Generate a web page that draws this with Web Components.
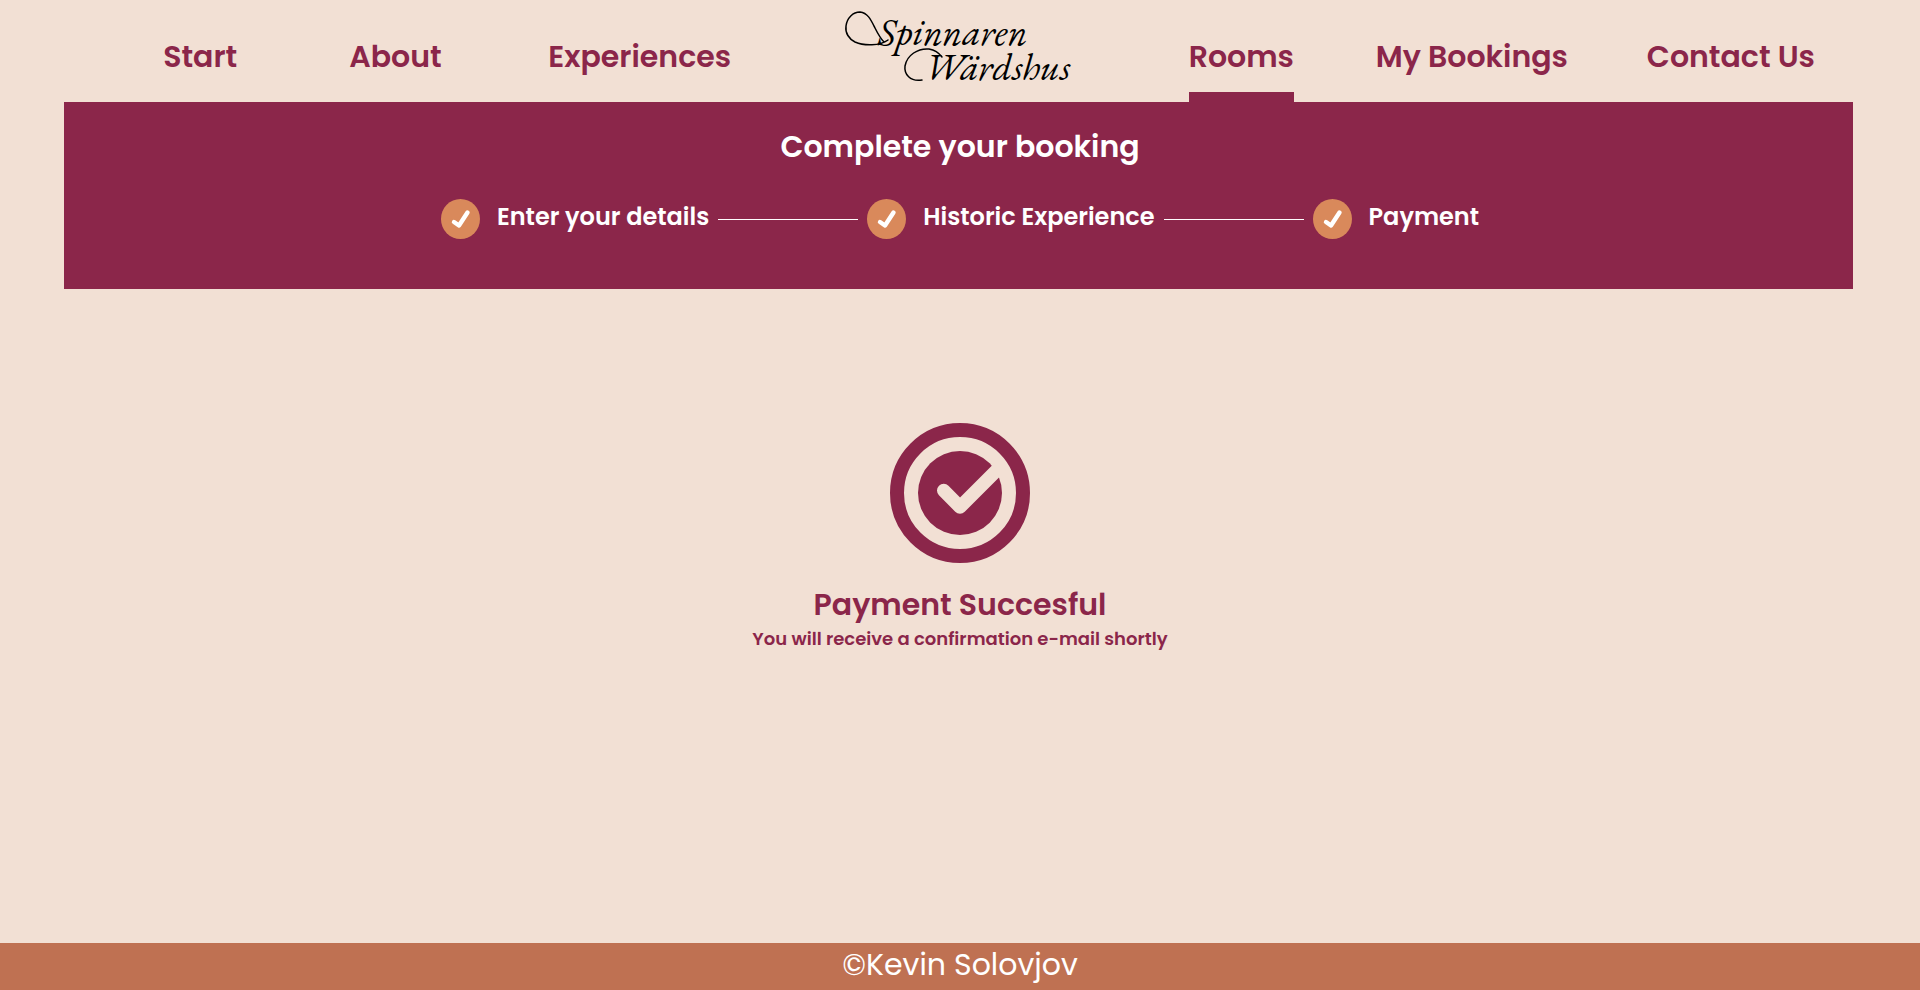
<!DOCTYPE html>
<html lang="en">
<head>
<meta charset="utf-8">
<title>Spinnaren Wärdshus – Payment</title>
<style>
  :root { --sand: #f2e0d4; --wine: #8b264a; --amber: #d9895b; --clay: #bf7152; --white: #fff; }
  body { margin: 0; background: var(--sand); color: var(--wine); font-family: Poppins, Inter, sans-serif; }
</style>
</head>
<body>
<booking-page></booking-page>

<script>
const define = (name, html) => {
  const template = document.createElement('template');
  template.innerHTML = html;
  customElements.define(name, class extends HTMLElement {
    constructor() {
      super();
      this.attachShadow({ mode: 'open' }).append(template.content.cloneNode(true));
    }
  });
};

define('nav-item', `
  <style>
    :host { display: flex; align-items: stretch; }
    a { box-sizing: border-box; padding-top: 34px; border-bottom: 10px solid transparent;
        font-size: 30px; line-height: 45px; font-weight: 600; color: var(--wine);
        text-decoration: none; white-space: nowrap; }
    :host([active]) a { border-bottom-color: var(--wine); }
  </style>
  <a href="#"><slot></slot></a>`);

define('inn-logo', `
  <style>
    :host { display: block; }
    a { display: block; width: 240px; }
    svg { display: block; width: 240px; height: 102px; overflow: visible; }
    text { font-family: Vivaldi, "EB Garamond", "Liberation Serif", serif; font-style: italic;
      font-size: 38px; fill: #000; }
    path { fill: none; stroke: #000; stroke-width: 1.5; stroke-linecap: round; stroke-linejoin: round; }
  </style>
  <a href="#" aria-label="Home">
    <svg viewBox="0 0 240 102">
      <path d="M44 40C36 46 20 46 11 42C5 39 1 33 2 26C3 18 9 12 16 12C24 13 27 20 31 28C34 34 36 38 40 42"/>
      <path d="M78 80C66 82 60 74 61 66C63 55 74 48 85 49C91 50 95 53 98 57"/>
      <text x="34" y="45">Spinnaren</text>
      <text x="81" y="80">Wärdshus</text>
    </svg>
  </a>`);

define('site-header', `
  <style>
    :host { display: block; }
    nav { display: grid; height: 102px;
      grid-template-columns: 186fr 199fr 295fr 345fr 187fr 271fr 273fr;
      padding-left: 8.5%; }
    nav > * { min-width: 0; }
  </style>
  <nav aria-label="Main">
    <nav-item>Start</nav-item>
    <nav-item>About</nav-item>
    <nav-item>Experiences</nav-item>
    <inn-logo></inn-logo>
    <nav-item active>Rooms</nav-item>
    <nav-item>My Bookings</nav-item>
    <nav-item>Contact Us</nav-item>
  </nav>`);

define('booking-step', `
  <style>
    :host { display: flex; align-items: center; gap: 17px; }
    svg { width: 39px; height: 40px; flex: none; }
    ellipse { fill: var(--amber); }
    path { fill: none; stroke: var(--white); stroke-width: 4.4; stroke-linecap: round; stroke-linejoin: round; }
    span { font-size: 24px; line-height: 36px; font-weight: 600; white-space: nowrap; margin-bottom: 4px; }
  </style>
  <svg viewBox="0 0 39 40" aria-hidden="true">
    <ellipse cx="19.5" cy="20" rx="19.5" ry="20"/>
    <path d="M13 23L18 26.5L26.5 13.5"/>
  </svg>
  <span><slot></slot></span>`);

define('booking-progress', `
  <style>
    :host { display: block; margin: 0 67px 0 64px; padding: 22px 0 50px 3px;
      background: var(--wine); color: var(--white); }
    h1 { margin: 0 0 30px; font-size: 30px; line-height: 45px; font-weight: 600; text-align: center; }
    ol { display: flex; justify-content: center; align-items: center; gap: 9px;
      margin: 0; padding: 0; list-style: none; }
    li { display: flex; align-items: center; gap: 9px; }
    li:not(:last-child)::after { content: ""; width: 140px; height: 1px; background: var(--white); }
  </style>
  <h1>Complete your booking</h1>
  <ol>
    <li><booking-step>Enter your details</booking-step></li>
    <li><booking-step>Historic Experience</booking-step></li>
    <li><booking-step>Payment</booking-step></li>
  </ol>`);

define('payment-result', `
  <style>
    :host { display: flex; flex-direction: column; align-items: center; padding: 134px 0; text-align: center; }
    svg { width: 140px; height: 140px; margin-bottom: 20px; }
    .ring { fill: none; stroke: var(--wine); stroke-width: 14; }
    .disc { fill: var(--wine); }
    .tick { fill: none; stroke: var(--sand); stroke-width: 13.4; stroke-linecap: round; stroke-linejoin: round; }
    h2, p { margin: 0; }
    h2 { font-size: 30px; line-height: 44px; font-weight: 600; }
    p { font-size: 18px; line-height: 24px; font-weight: 600; }
  </style>
  <svg viewBox="0 0 140 140" aria-hidden="true">
    <circle class="ring" cx="70" cy="70" r="63"/>
    <circle class="disc" cx="70" cy="70" r="42"/>
    <path class="tick" d="M53.7 67.5L70 84L109 45"/>
  </svg>
  <h2><slot name="title"></slot></h2>
  <p><slot></slot></p>`);

define('site-footer', `
  <style>
    :host { display: block; padding-bottom: 3px; background: var(--clay); color: var(--white);
      font-size: 30px; line-height: 44px; text-align: center; }
  </style>
  <slot></slot>`);

define('booking-page', `
  <style>
    :host { display: flex; flex-direction: column; min-height: 100vh; }
    main { flex: 1; }
  </style>
  <site-header></site-header>
  <main>
    <booking-progress></booking-progress>
    <payment-result>
      <span slot="title">Payment Succesful</span>
      You will receive a confirmation e-mail shortly
    </payment-result>
  </main>
  <site-footer>©Kevin Solovjov</site-footer>`);
</script>
</body>
</html>
